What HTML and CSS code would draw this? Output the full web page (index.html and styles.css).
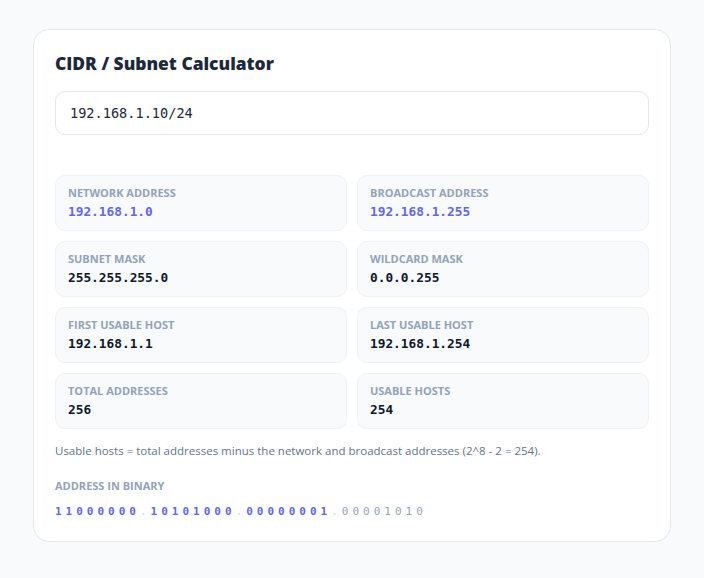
FILE: index.html
```html
<!DOCTYPE html>
<html lang="en">
<head>
    <meta charset="UTF-8">
    <meta name="viewport" content="width=device-width, initial-scale=1.0">
    <title>CIDR / Subnet Calculator</title>
    <link rel="stylesheet" href="styles.css">
</head>
<body>
    <div class="card">
        <h2 class="title">CIDR / Subnet Calculator</h2>
        <input type="text" id="cidr" class="cidr-input" value="192.168.1.10/24" spellcheck="false">

        <div class="results">
            <div class="cell">
                <div class="label">Network address</div>
                <div class="value accent">192.168.1.0</div>
            </div>
            <div class="cell">
                <div class="label">Broadcast address</div>
                <div class="value accent">192.168.1.255</div>
            </div>
            <div class="cell">
                <div class="label">Subnet mask</div>
                <div class="value">255.255.255.0</div>
            </div>
            <div class="cell">
                <div class="label">Wildcard mask</div>
                <div class="value">0.0.0.255</div>
            </div>
            <div class="cell">
                <div class="label">First usable host</div>
                <div class="value">192.168.1.1</div>
            </div>
            <div class="cell">
                <div class="label">Last usable host</div>
                <div class="value">192.168.1.254</div>
            </div>
            <div class="cell">
                <div class="label">Total addresses</div>
                <div class="value">256</div>
            </div>
            <div class="cell">
                <div class="label">Usable hosts</div>
                <div class="value">254</div>
            </div>
        </div>

        <p class="note">Usable hosts = total addresses minus the network and broadcast addresses (2^8 - 2 = 254).</p>

        <div class="label">Address in binary</div>
        <div class="binary"><span class="net">11000000</span><span class="dot">.</span><span class="net">10101000</span><span class="dot">.</span><span class="net">00000001</span><span class="dot">.</span><span class="host">00001010</span></div>
    </div>
</body>
</html>
```

FILE: styles.css
```css
body {
    margin: 0;
    padding: 29px 33px;
    background: #f8fafc;
    font-family: "Open Sans", Arial, sans-serif;
    color: #1e293b;
}
.card {
    background: #fff;
    border: 1px solid #e2e8f0;
    border-radius: 16px;
    padding: 21px 21px 22px;
}
.title {
    margin: 0 0 15px;
    font-size: 17.4px;
    font-weight: 800;
    color: #1e293b;
    line-height: 25px;
}
.cidr-input {
    display: block;
    width: 100%;
    box-sizing: border-box;
    height: 44px;
    padding: 0 14px;
    border: 1px solid #e2e8f0;
    border-radius: 10px;
    font-family: "DejaVu Sans Mono", monospace;
    font-size: 13.6px;
    color: #1e293b;
    outline: none;
    margin-bottom: 40px;
}
.results {
    display: grid;
    grid-template-columns: 1fr 1fr;
    gap: 10px;
}
.cell {
    background: #f8fafc;
    border: 1px solid #eef2f6;
    border-radius: 10px;
    padding: 9px 12px 11px;
}
.label {
    font-size: 11px;
    line-height: 15px;
    font-weight: 700;
    text-transform: uppercase;
    color: #94a3b8;
}
.value {
    margin-top: 4px;
    font-family: "DejaVu Sans Mono", monospace;
    font-size: 12.8px;
    line-height: 15px;
    font-weight: 700;
    color: #0f172a;
}
.value.accent {
    color: #6366f1;
}
.note {
    margin: 14px 0 20px;
    font-size: 11.5px;
    line-height: 15px;
    color: #64748b;
}
.binary {
    margin-top: 11px;
    font-family: "DejaVu Sans Mono", monospace;
    font-size: 11px;
    line-height: 15px;
    letter-spacing: 4px;
}
.binary .net {
    color: #6366f1;
    font-weight: 700;
}
.binary .dot {
    color: #cbd5e1;
}
.binary .host {
    color: #94a3b8;
}
```
